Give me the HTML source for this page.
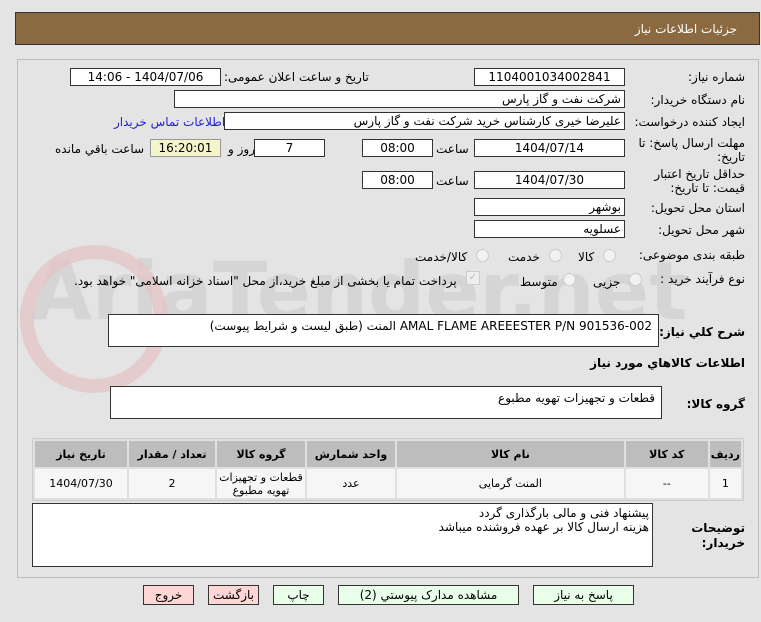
<!DOCTYPE html>
<html><head><meta charset="utf-8"><style>
body{margin:0;width:761px;height:622px;background:#e4e4e4;font-family:"DejaVu Sans","Liberation Sans",sans-serif;font-size:12px;color:#000;position:relative;overflow:hidden;direction:rtl}
.a{position:absolute}
.hdr{left:15px;top:12px;width:743px;height:31px;background:#8b6a41;border:1px solid #333}
.hdr span{position:absolute;right:22px;top:9px;color:#fff;font-size:12px}
.panel{left:17px;top:59px;width:740px;height:517px;border:1px solid #bdbdbd;background:#e4e4e4}
.in{position:absolute;background:#fff;border:1px solid #333;height:16px;line-height:16px;font-size:12px;text-align:center;box-sizing:content-box}
.r{text-align:right;padding-right:3px}
.l{position:absolute;white-space:nowrap;font-size:12px}
.b{font-weight:bold}
.rad{position:absolute;width:11px;height:11px;border-radius:50%;border:1px solid #ccc;background:#f2f2f2}
table{position:absolute;left:32px;top:438px;width:712px;border-collapse:separate;border-spacing:2px;background:#e0e0e0;border:1px solid #ccc}
th{background:#bdbdbd;height:24px;font-size:11px}
td{background:#f6f6f6;height:27px;text-align:center;font-size:11px}
.btn{position:absolute;top:585px;height:18px;border:1px solid #333;background:#eaffea;text-align:center;line-height:18px;font-size:12px}
.pk{background:#ffd6d6}
</style></head><body>
<div class="a hdr"><span>جزئیات اطلاعات نیاز</span></div>
<div class="a panel"></div>
<div class="a" style="left:30px;top:245px;font-size:80px;font-weight:bold;color:#d0d0d0;direction:ltr;opacity:.7">AriaTender.net</div>
<div class="a" style="left:20px;top:245px;width:120px;height:120px;border-radius:50%;border:14px solid #e6c2c2;opacity:.7"></div>

<div class="l" style="right:16px;top:70px">شماره نیاز:</div>
<div class="in" style="left:474px;top:68px;width:149px">1104001034002841</div>
<div class="l" style="left:224px;top:70px">تاریخ و ساعت اعلان عمومی:</div>
<div class="in" style="left:70px;top:68px;width:149px">1404/07/06 - 14:06</div>

<div class="l" style="right:16px;top:93px">نام دستگاه خریدار:</div>
<div class="in r" style="left:174px;top:90px;width:446px">شرکت نفت و گاز پارس</div>

<div class="l" style="right:16px;top:115px">ایجاد کننده درخواست:</div>
<div class="in r" style="left:224px;top:112px;width:396px">علیرضا  خیری کارشناس خرید  شرکت نفت و گاز پارس</div>
<div class="l" style="left:114px;top:115px;color:#22c">اطلاعات تماس خریدار</div>

<div class="l" style="right:16px;top:136px;line-height:14px;text-align:right">مهلت ارسال پاسخ: تا<br>تاریخ:</div>
<div class="in" style="left:474px;top:139px;width:149px">1404/07/14</div>
<div class="l" style="left:436px;top:142px">ساعت</div>
<div class="in" style="left:362px;top:139px;width:69px">08:00</div>
<div class="in" style="left:254px;top:139px;width:69px">7</div>
<div class="l" style="left:228px;top:142px">روز و</div>
<div class="in" style="left:150px;top:139px;width:69px;background:#f5f5cc;border-color:#999">16:20:01</div>
<div class="l" style="left:55px;top:142px">ساعت باقي مانده</div>

<div class="l" style="right:16px;top:167px;line-height:14px;text-align:right">حداقل تاریخ اعتبار<br>قیمت: تا تاریخ:</div>
<div class="in" style="left:474px;top:171px;width:149px">1404/07/30</div>
<div class="l" style="left:436px;top:174px">ساعت</div>
<div class="in" style="left:362px;top:171px;width:69px">08:00</div>

<div class="l" style="right:16px;top:201px">استان محل تحویل:</div>
<div class="in r" style="left:474px;top:198px;width:146px">بوشهر</div>
<div class="l" style="right:16px;top:223px">شهر محل تحویل:</div>
<div class="in r" style="left:474px;top:220px;width:146px">عسلویه</div>

<div class="l" style="right:16px;top:248px">طبقه بندی موضوعی:</div>
<div class="rad" style="left:603px;top:249px"></div><div class="l" style="left:578px;top:250px">کالا</div>
<div class="rad" style="left:549px;top:249px"></div><div class="l" style="left:508px;top:250px">خدمت</div>
<div class="rad" style="left:476px;top:249px"></div><div class="l" style="left:415px;top:250px">کالا/خدمت</div>

<div class="l" style="right:16px;top:272px">نوع فرآیند خرید :</div>
<div class="rad" style="left:629px;top:273px"></div><div class="l" style="left:593px;top:275px">جزیی</div>
<div class="rad" style="left:563px;top:273px"></div><div class="l" style="left:520px;top:275px">متوسط</div>
<div class="a" style="left:466px;top:271px;width:12px;height:12px;border:1px solid #ccc;background:#eee;color:#bbb;font-size:10px;line-height:12px;text-align:center">✓</div>
<div class="l" style="left:74px;top:274px">پرداخت تمام یا بخشی از مبلغ خرید،از محل "اسناد خزانه اسلامی" خواهد بود.</div>

<div class="l b" style="right:16px;top:325px">شرح كلي نياز:</div>
<div class="in r" style="left:108px;top:314px;width:543px;height:31px;line-height:22px;padding-right:6px">AMAL FLAME AREEESTER  P/N 901536-002 المنت (طبق لیست و شرایط پیوست)</div>
<div class="l b" style="right:16px;top:356px">اطلاعات كالاهاي مورد نياز</div>
<div class="l b" style="right:16px;top:397px">گروه كالا:</div>
<div class="in r" style="left:110px;top:386px;width:544px;height:31px;line-height:22px;padding-right:6px">قطعات و تجهیزات تهویه مطبوع</div>

<table>
<tr><th style="width:26px">ردیف</th><th style="width:80px">کد کالا</th><th>نام کالا</th><th style="width:86px">واحد شمارش</th><th style="width:86px">گروه کالا</th><th style="width:84px">تعداد / مقدار</th><th style="width:90px">تاریخ نیاز</th></tr>
<tr><td>1</td><td>--</td><td>المنت گرمایی</td><td>عدد</td><td style="line-height:13px">قطعات و تجهیزات<br>تهویه مطبوع</td><td>2</td><td>1404/07/30</td></tr>
</table>

<div class="l b" style="right:16px;top:521px;line-height:15px;text-align:right">توضیحات<br>خریدار:</div>
<div class="in r" style="left:32px;top:503px;width:616px;height:60px;line-height:14px;padding-top:2px;padding-right:3px">پیشنهاد فنی و مالی بارگذاری گردد<br>هزینه ارسال کالا بر عهده فروشنده میباشد</div>

<div class="btn" style="left:533px;width:99px">پاسخ به نیاز</div>
<div class="btn" style="left:338px;width:179px">مشاهده مدارک پیوستي (2)</div>
<div class="btn" style="left:273px;width:49px">چاپ</div>
<div class="btn pk" style="left:208px;width:49px">بازگشت</div>
<div class="btn pk" style="left:143px;width:49px">خروج</div>
</body></html>
